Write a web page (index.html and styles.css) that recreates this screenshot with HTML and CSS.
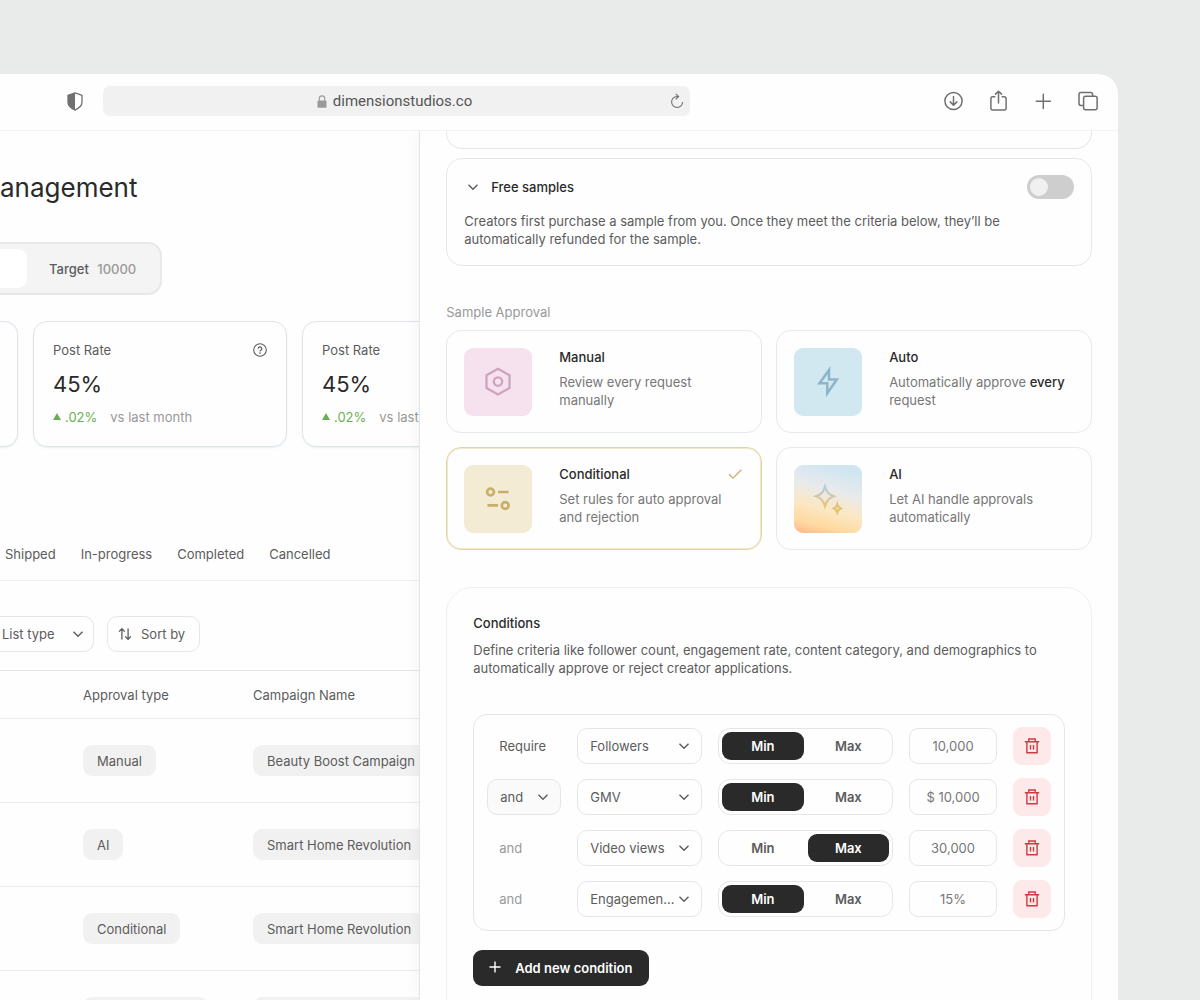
FILE: index.html
```html
<!DOCTYPE html>
<html lang="en">
<head>
    <meta charset="UTF-8">
    <meta name="viewport" content="width=device-width, initial-scale=1.0">
    <title>Sample Management</title>
    <link rel="stylesheet" href="styles.css">
</head>
<body>

    <!-- shared icons -->
    <svg class="sprite" aria-hidden="true">
        <symbol id="chevron" viewBox="0 0 12 12">
            <path d="M1.5 3.7 6 8.2l4.5-4.5" fill="none" stroke="currentColor" stroke-width="1.4"/>
        </symbol>
        <symbol id="trash" viewBox="0 0 16 18">
            <path d="M.8 4.7h14.4M4.800 4.500V2h6.400v2.500M2.900 4.900v10.900h10.200V4.900M6.500 8v4.400M9.500 8v4.400" fill="none" stroke="currentColor" stroke-width="1.4"/>
        </symbol>
        <symbol id="help" viewBox="0 0 14 14">
            <circle cx="7" cy="7" r="6.3" fill="none" stroke="currentColor" stroke-width="1.1"/>
            <path d="M5.2 5.7a1.8 1.8 0 1 1 2.6 1.6c-.5.3-.8.5-.8 1.1" fill="none" stroke="currentColor" stroke-width="1.2"/>
            <circle cx="7" cy="10.1" r=".8" fill="currentColor"/>
        </symbol>
    </svg>

    <div class="browser">
        <header class="toolbar">
            <svg class="shield" width="16" height="19" viewBox="0 0 16 19" aria-hidden="true">
                <path d="M8 .9 15 3.300v6.900c0 3.300-2.800 5.800-7 7.900-4.200-2.100-7-4.600-7-7.900V3.300z" fill="none" stroke="currentColor" stroke-width="1.300" stroke-linejoin="round"/>
                <path d="M8 .9v17.200c-4.200-2.100-7-4.600-7-7.900V3.300z" fill="currentColor"/>
            </svg>
            <div class="address">
                <span class="url">
                    <svg width="10" height="13" viewBox="0 0 10 13" aria-hidden="true">
                        <path d="M2.300 6V3.600a2.700 2.700 0 0 1 5.400 0V6" fill="none" stroke="currentColor" stroke-width="1.100"/>
                        <rect x=".5" y="5.600" width="9" height="7.200" rx="1" fill="currentColor"/>
                    </svg>
                    dimensionstudios.co
                </span>
                <button class="icon-button reload" aria-label="Reload">
                    <svg width="14" height="16" viewBox="0 0 14 16">
                        <path d="M8.300 3.500H7a5.500 5.500 0 1 0 5.600 5.500M5.700.8l2.900 2.700-2.900 2.800" fill="none" stroke="currentColor" stroke-width="1.100"/>
                    </svg>
                </button>
            </div>
            <div class="tools">
                <button class="icon-button" aria-label="Downloads">
                    <svg width="20" height="22" viewBox="0 0 20 22">
                        <g fill="none" stroke="currentColor" stroke-width="1.500" stroke-linecap="round" stroke-linejoin="round">
                            <circle cx="10.500" cy="11" r="8.600"/>
                            <path d="M10.500 6.500v8.500M7.200 11.900l3.300 3.300 3.300-3.300"/>
                        </g>
                    </svg>
                </button>
                <button class="icon-button" aria-label="Share">
                    <svg width="20" height="22" viewBox="0 0 20 22">
                        <path d="M6.800 6.700H4.700c-1 0-1.800.7-1.800 1.800v9.800c0 1 .7 1.700 1.800 1.700h11.600c1 0 1.800-.7 1.800-1.700V8.500c0-1-.7-1.800-1.800-1.800h-2.100M10.500 13V1.300M7.400 4.100l3.100-2.900 3.100 2.900" fill="none" stroke="currentColor" stroke-width="1.500" stroke-linecap="round" stroke-linejoin="round"/>
                    </svg>
                </button>
                <button class="icon-button" aria-label="New tab">
                    <svg width="20" height="22" viewBox="0 0 20 22">
                        <path d="M10.300 4.200v14.200M3.200 11.300h14.200" fill="none" stroke="currentColor" stroke-width="1.500" stroke-linecap="round"/>
                    </svg>
                </button>
                <button class="icon-button" aria-label="Show tabs">
                    <svg width="20" height="22" viewBox="0 0 20 22">
                        <g fill="none" stroke="currentColor" stroke-width="1.500">
                            <rect x="5.600" y="6.300" width="13.500" height="13.500" rx="2"/>
                            <path d="M5.600 15.500H2.900c-1.200 0-1.900-.7-1.900-1.900V4.300c0-1.200.7-1.900 1.900-1.900h9.800c1.200 0 1.900.7 1.900 1.900v2"/>
                        </g>
                    </svg>
                </button>
            </div>
        </header>

        <div class="content">
            <main class="dashboard">
                <h1>anagement</h1>

                <div class="switcher">
                    <span class="switcher-active"></span>
                    <button class="switcher-item">Target <span>10000</span></button>
                </div>

                <section class="stats">
                    <div class="stat stat-cut"></div>
                    <div class="stat">
                        <div class="stat-head">Post Rate
                            <svg class="help" width="14" height="14"><use href="#help"/></svg>
                        </div>
                        <div class="stat-value">45%</div>
                        <div class="stat-change">
                            <svg width="8" height="9" viewBox="0 0 8 9"><path d="M4 0l4 7H0z" fill="currentColor"/></svg>
                            <b>.02%</b> <span>vs last month</span>
                        </div>
                    </div>
                    <div class="stat">
                        <div class="stat-head">Post Rate</div>
                        <div class="stat-value">45%</div>
                        <div class="stat-change">
                            <svg width="8" height="9" viewBox="0 0 8 9"><path d="M4 0l4 7H0z" fill="currentColor"/></svg>
                            <b>.02%</b> <span>vs last</span>
                        </div>
                    </div>
                </section>

                <nav class="tabs">
                    <a href="#shipped">Shipped</a>
                    <a href="#in-progress">In-progress</a>
                    <a href="#completed">Completed</a>
                    <a href="#cancelled">Cancelled</a>
                </nav>

                <div class="filters">
                    <div class="select list-type">
                        <select aria-label="List type"><option>List type</option></select>
                        <svg width="12" height="12"><use href="#chevron"/></svg>
                    </div>
                    <button class="sort">
                        <svg width="14" height="14" viewBox="0 0 14 14" aria-hidden="true">
                            <path d="M3.900 12.500V1.800M1 4.600l2.900-2.900 2.900 2.900M10.100 1.500v10.700M7.200 9.400l2.900 2.900L13 9.400" fill="none" stroke="currentColor" stroke-width="1.300"/>
                        </svg>
                        Sort by
                    </button>
                </div>

                <table class="requests">
                    <thead>
                        <tr><th class="col-first"></th><th class="col-type">Approval type</th><th>Campaign Name</th></tr>
                    </thead>
                    <tbody>
                        <tr><td></td><td><span class="pill">Manual</span></td><td><span class="pill">Beauty Boost Campaign</span></td></tr>
                        <tr><td></td><td><span class="pill">AI</span></td><td><span class="pill">Smart Home Revolution</span></td></tr>
                        <tr><td></td><td><span class="pill">Conditional</span></td><td><span class="pill">Smart Home Revolution</span></td></tr>
                        <tr><td></td><td><span class="pill pill-empty"></span></td><td><span class="pill pill-empty pill-long"></span></td></tr>
                    </tbody>
                </table>
            </main>

            <aside class="drawer">
                <div class="card card-cut"></div>

                <section class="card samples">
                    <div class="samples-head">
                        <svg width="12" height="12"><use href="#chevron"/></svg>
                        <label for="free-samples">Free samples</label>
                        <input class="toggle" type="checkbox" id="free-samples">
                    </div>
                    <p>Creators first purchase a sample from you. Once they meet the criteria below, they’ll be automatically refunded for the sample.</p>
                </section>

                <h2 class="section-label">Sample Approval</h2>
                <div class="options">
                    <label class="option">
                        <input type="radio" name="approval">
                        <span class="tile tile-manual">
                            <svg width="30" height="30" viewBox="0 0 30 30">
                                <g fill="none" stroke="#cda3bd" stroke-width="2.200">
                                    <path d="M15 1.800 26.500 8.200v12.800L15 27.400 3.500 21V8.200z"/>
                                    <circle cx="15" cy="14.600" r="4.200"/>
                                </g>
                            </svg>
                        </span>
                        <span class="option-text"><strong>Manual</strong>Review every request manually</span>
                    </label>
                    <label class="option">
                        <input type="radio" name="approval">
                        <span class="tile tile-auto">
                            <svg width="30" height="34" viewBox="0 0 30 34">
                                <path d="M16 5 6.500 18.300h7.800v9.900l9.500-13.700H16z" fill="none" stroke="#8cb5cb" stroke-width="2.500"/>
                            </svg>
                        </span>
                        <span class="option-text"><strong>Auto</strong>Automatically approve <em>every</em> request</span>
                    </label>
                    <label class="option">
                        <input type="radio" name="approval" checked>
                        <span class="tile tile-conditional">
                            <svg width="30" height="30" viewBox="0 0 30 30">
                                <g fill="none" stroke="#c9b06a" stroke-width="2.700">
                                    <circle cx="7.500" cy="8" r="3.400"/>
                                    <circle cx="22.200" cy="21.500" r="3.400"/>
                                    <path d="M15 8h10.500M4.500 21.300H15"/>
                                </g>
                            </svg>
                        </span>
                        <span class="option-text"><strong>Conditional
                            <svg class="check" width="14" height="11" viewBox="0 0 14 11"><path d="M1 5.200l4 4L13.300.8" fill="none" stroke="currentColor" stroke-width="1.300"/></svg></strong>Set rules for auto approval and rejection</span>
                    </label>
                    <label class="option">
                        <input type="radio" name="approval">
                        <span class="tile tile-ai">
                            <svg width="32" height="32" viewBox="0 0 32 32">
                                <defs>
                                    <linearGradient id="star" x1="0" y1="0" x2="0" y2="1">
                                        <stop offset="0" stop-color="#b4cbdc"/>
                                        <stop offset=".5" stop-color="#cfc9b4"/>
                                        <stop offset="1" stop-color="#e8c766"/>
                                    </linearGradient>
                                </defs>
                                <path d="M13 3.500c1.700 5.500 3.500 7.700 8.900 9.800-5.400 2.100-7.200 4.300-8.900 9.800-1.700-5.500-3.500-7.700-9-9.800 5.500-2.100 7.300-4.300 9-9.800z" fill="none" stroke="url(#star)" stroke-width="2.200"/>
                                <path d="M25.300 21.200c.6 2.200 1.500 3.200 3.700 4.200-2.200 1-3.100 2-3.700 4.200-.6-2.200-1.500-3.200-3.700-4.200 2.200-1 3.100-2 3.700-4.200z" fill="#f6dc9c" stroke="#e0c376" stroke-width="2"/>
                            </svg>
                        </span>
                        <span class="option-text"><strong>AI</strong>Let AI handle approvals automatically</span>
                    </label>
                </div>

                <section class="card conditions">
                    <h2>Conditions</h2>
                    <p>Define criteria like follower count, engagement rate, content category, and demographics to automatically approve or reject creator applications.</p>

                    <div class="rules">
                        <div class="rule">
                            <span class="joiner joiner-first">Require</span>
                            <div class="select">
                                <select aria-label="Metric"><option>Followers</option></select>
                                <svg width="12" height="12"><use href="#chevron"/></svg>
                            </div>
                            <div class="minmax"><button class="on">Min</button><button>Max</button></div>
                            <input class="amount" type="text" aria-label="Amount" value="10,000">
                            <button class="delete" aria-label="Delete condition"><svg width="16" height="18"><use href="#trash"/></svg></button>
                        </div>
                        <div class="rule">
                            <div class="select select-join">
                                <select aria-label="Operator"><option>and</option></select>
                                <svg width="12" height="12"><use href="#chevron"/></svg>
                            </div>
                            <div class="select">
                                <select aria-label="Metric"><option>GMV</option></select>
                                <svg width="12" height="12"><use href="#chevron"/></svg>
                            </div>
                            <div class="minmax"><button class="on">Min</button><button>Max</button></div>
                            <input class="amount" type="text" aria-label="Amount" value="$ 10,000">
                            <button class="delete" aria-label="Delete condition"><svg width="16" height="18"><use href="#trash"/></svg></button>
                        </div>
                        <div class="rule">
                            <span class="joiner">and</span>
                            <div class="select">
                                <select aria-label="Metric"><option>Video views</option></select>
                                <svg width="12" height="12"><use href="#chevron"/></svg>
                            </div>
                            <div class="minmax"><button>Min</button><button class="on">Max</button></div>
                            <input class="amount" type="text" aria-label="Amount" value="30,000">
                            <button class="delete" aria-label="Delete condition"><svg width="16" height="18"><use href="#trash"/></svg></button>
                        </div>
                        <div class="rule">
                            <span class="joiner">and</span>
                            <div class="select">
                                <select aria-label="Metric"><option>Engagemen...</option></select>
                                <svg width="12" height="12"><use href="#chevron"/></svg>
                            </div>
                            <div class="minmax"><button class="on">Min</button><button>Max</button></div>
                            <input class="amount" type="text" aria-label="Amount" value="15%">
                            <button class="delete" aria-label="Delete condition"><svg width="16" height="18"><use href="#trash"/></svg></button>
                        </div>
                    </div>

                    <button class="add">
                        <svg width="12" height="14" viewBox="0 0 12 14" aria-hidden="true"><path d="M6 .5v11M.5 6h11" stroke="currentColor" stroke-width="1.400"/></svg>
                        Add new condition
                    </button>
                </section>
            </aside>
        </div>
    </div>

</body>
</html>
```

FILE: styles.css
```css
* {
    box-sizing: border-box;
}
body {
    margin: 0;
    height: 100vh;
    padding: 74px 82px 0 0;
    overflow: hidden;
    background: #e9ebea;
    color: #5c5c5c;
    font-family: Inter, sans-serif;
    font-size: 13px;
    line-height: 18px;
}
h1, h2, p {
    margin: 0;
    font-weight: 400;
}
button, input, select {
    font: inherit;
    color: inherit;
}
button {
    border: none;
    background: none;
    padding: 0;
    cursor: pointer;
}
svg {
    flex: none;
}
.sprite {
    position: absolute;
    width: 0;
    height: 0;
}
.browser {
    display: flex;
    flex-direction: column;
    height: 100%;
    overflow: hidden;
    background: #fefefe;
    border-radius: 0 20px 0 0;
}

/* toolbar */
.toolbar {
    display: flex;
    align-items: center;
    flex: none;
    height: 57px;
    padding: 0 20px 2px 67px;
    border-bottom: 1px solid #f3f3f3;
    color: #707070;
}
.address {
    display: flex;
    align-items: center;
    flex: 0 1 587px;
    height: 30px;
    margin-left: 20px;
    padding: 0 6px 0 16px;
    border-radius: 7px;
    background: #f1f1f1;
}
.url {
    display: flex;
    align-items: center;
    justify-content: center;
    gap: 6px;
    flex: 1;
    font-family: Roboto, sans-serif;
    font-size: 15px;
    color: #555;
}
.url svg {
    color: #999;
}
.icon-button {
    display: flex;
}
.tools {
    display: flex;
    gap: 25px;
    margin-left: auto;
}

.content {
    display: grid;
    grid-template-columns: 3fr 5fr;
    flex: 1;
    min-height: 0;
}

/* dashboard */
.dashboard {
    min-width: 0;
    overflow: hidden;
}
h1 {
    margin-top: 40px;
    font-size: 26px;
    line-height: 34px;
    color: #2a2a2a;
}
.switcher {
    display: flex;
    width: fit-content;
    height: 53px;
    margin-top: 37px;
    padding: 5px 0;
    border: 2px solid #e8e8e8;
    border-left: none;
    border-radius: 0 14px 14px 0;
    background: #f4f4f4;
}
.switcher-active {
    width: 27px;
    border-radius: 0 9px 9px 0;
    background: #fff;
}
.switcher-item {
    padding: 0 24px 0 22px;
    font-weight: 500;
}
.switcher-item span {
    margin-left: 5px;
    color: #999;
}
.stats {
    display: flex;
    gap: 15px;
    margin-top: 26px;
}
.stat {
    flex: 0 0 254px;
    height: 126px;
    padding: 19px;
    border: 1px solid #dfe4ea;
    border-radius: 14px;
    box-shadow: 0 1px 2px rgba(200, 215, 230, 0.4);
}
.stat-cut {
    flex-basis: 18px;
    padding: 0;
    border-left: none;
    border-radius: 0 14px 14px 0;
}
.stat-head {
    display: flex;
    align-items: center;
    justify-content: space-between;
}
.stat-value {
    margin-top: 11px;
    font-size: 22px;
    line-height: 28px;
    color: #2a2a2a;
}
.stat-change {
    display: flex;
    align-items: center;
    margin-top: 10px;
    color: #6aaf50;
}
.stat-change b {
    margin: 0 13px 0 4px;
    font-weight: 400;
}
.stat-change span {
    color: #999;
}
.tabs {
    display: flex;
    gap: 25px;
    margin-top: 84px;
    padding: 14px 5px 17px;
    border-bottom: 1px solid #f0f0f0;
}
.tabs a {
    color: inherit;
    text-decoration: none;
}
.filters {
    display: flex;
    gap: 13px;
    margin: 35px 0 18px;
}
.sort {
    display: flex;
    align-items: center;
    gap: 9px;
    height: 36px;
    padding: 0 14px 0 10px;
    border: 1px solid #e6e6e6;
    border-radius: 10px;
}
.requests {
    width: 640px;
    table-layout: fixed;
    border-collapse: collapse;
}
.requests th {
    height: 48px;
    padding: 0;
    border-top: 1px solid #e6e6e8;
    font-weight: 400;
    text-align: left;
}
.requests td {
    height: 84px;
    padding: 0;
    border-top: 1px solid #e9ebec;
}
.col-first {
    width: 83px;
}
.col-type {
    width: 170px;
}
.pill {
    display: inline-block;
    padding: 7px 14px 6px;
    border-radius: 9px;
    background: #f1f1f1;
    white-space: nowrap;
    vertical-align: middle;
}
.pill-empty {
    width: 125px;
    height: 31px;
}
.pill-long {
    width: 200px;
}

/* drawer */
.drawer {
    display: flex;
    flex-direction: column;
    min-width: 0;
    padding: 0 26px;
    overflow: hidden;
    border-left: 1px solid #e4e5e9;
    box-shadow: -2px 0 12px rgba(60, 70, 120, 0.05);
    clip-path: inset(0 0 0 -20px);
}
.card {
    flex: none;
    border: 1px solid #e6e8e8;
    border-radius: 16px;
}
.card-cut {
    height: 18px;
    border-top: none;
    border-radius: 0 0 16px 16px;
}
.samples {
    margin-top: 9px;
    padding: 16px 17px 17px;
}
.samples-head {
    display: flex;
    align-items: center;
    gap: 12px;
    margin-bottom: 13px;
    padding-left: 3px;
}
.samples-head label {
    flex: 1;
    font-weight: 500;
    color: #2a2a2a;
}
.toggle {
    appearance: none;
    display: flex;
    width: 47px;
    height: 24px;
    margin: 0;
    padding: 3px;
    border-radius: 12px;
    background: #cecece;
}
.toggle::before {
    content: "";
    width: 18px;
    height: 18px;
    border-radius: 50%;
    background: #f0f0f0;
}
.toggle:checked {
    justify-content: flex-end;
    background: #2a2a2a;
}
.section-label {
    margin: 37px 0 9px;
    font-size: 13px;
    line-height: 18px;
    color: #999;
}
.options {
    display: grid;
    grid-template-columns: 1fr 1fr;
    gap: 14px;
}
.option {
    display: flex;
    padding: 17px 17px 16px;
    border: 1px solid #e8e9ea;
    border-radius: 15px;
    cursor: pointer;
}
.option:has(input:checked) {
    border-color: #e3d5a3;
    box-shadow: inset 0 0 0 1px #f0e8cc;
}
.option input {
    appearance: none;
    width: 0;
    margin: 0;
}
.tile {
    display: flex;
    align-items: center;
    justify-content: center;
    flex: none;
    width: 68px;
    height: 68px;
    margin-right: 27px;
    border-radius: 9px;
}
.tile-manual { background: #f6e2ee; }
.tile-auto { background: #d2e8f1; }
.tile-conditional { background: #f4ebd5; }
.tile-ai {
    background: linear-gradient(195deg, #cfe6f1 10%, #e8eaec 38%, #fbe8c4 62%, #ffd9a0 84%, #fdb48c 100%);
}
.option-text {
    flex: 1;
    color: #777;
}
.option-text strong {
    display: flex;
    align-items: center;
    justify-content: space-between;
    margin-bottom: 7px;
    font-weight: 500;
    color: #2a2a2a;
}
.option-text em {
    font-style: normal;
    font-weight: 500;
    color: #2a2a2a;
}
.check {
    margin-right: 2px;
    color: #c9b06a;
}
.conditions {
    margin-top: 37px;
    padding: 26px 26px 60px;
    border-color: #eff0f0;
    border-radius: 26px;
}
.conditions h2 {
    margin-bottom: 9px;
    font-size: 13px;
    font-weight: 500;
    line-height: 18px;
    color: #2a2a2a;
}
.rules {
    display: grid;
    gap: 13px;
    margin: 37px 0 19px;
    padding: 12px 13px;
    border: 1px solid #e6e6e6;
    border-radius: 14px;
}
.rule {
    display: grid;
    grid-template-columns: 74fr 125fr 175fr 88fr 38fr;
    gap: 16px;
    align-items: center;
}
.joiner {
    padding-left: 12px;
    color: #999;
}
.joiner-first {
    color: inherit;
}
.select {
    display: grid;
    align-items: center;
}
.select select,
.select svg {
    grid-area: 1 / 1;
}
.select select {
    appearance: none;
    width: 100%;
    height: 36px;
    padding: 0 0 0 12px;
    border: 1px solid #e6e6e6;
    border-radius: 10px;
    background: none;
}
.select svg {
    justify-self: end;
    margin-right: 12px;
    pointer-events: none;
}
.select-join select {
    background: #fafafa;
}
.list-type {
    width: 94px;
}
.list-type select {
    padding-left: 2px;
    border-left: none;
    border-radius: 0 10px 10px 0;
}
.list-type svg {
    margin-right: 10px;
}
.minmax {
    display: grid;
    grid-template-columns: 1fr 1fr;
    gap: 4px;
    height: 36px;
    padding: 3px;
    border: 1px solid #e6e6e6;
    border-radius: 12px;
}
.minmax button {
    border-radius: 9px;
    font-weight: 600;
}
.minmax .on {
    background: #2a2a2a;
    color: #fff;
}
.amount {
    width: 100%;
    height: 36px;
    padding: 0;
    border: 1px solid #e6e6e6;
    border-radius: 9px;
    background: none;
    color: #777;
    text-align: center;
}
.delete {
    display: flex;
    align-items: center;
    justify-content: center;
    height: 38px;
    border-radius: 9px;
    background: #fde9e9;
    color: #cc3b42;
}
.add {
    display: flex;
    align-items: center;
    gap: 14px;
    height: 36px;
    padding: 0 17px 0 16px;
    border-radius: 9px;
    background: #2a2a2a;
    color: #fff;
    font-weight: 600;
}
```
